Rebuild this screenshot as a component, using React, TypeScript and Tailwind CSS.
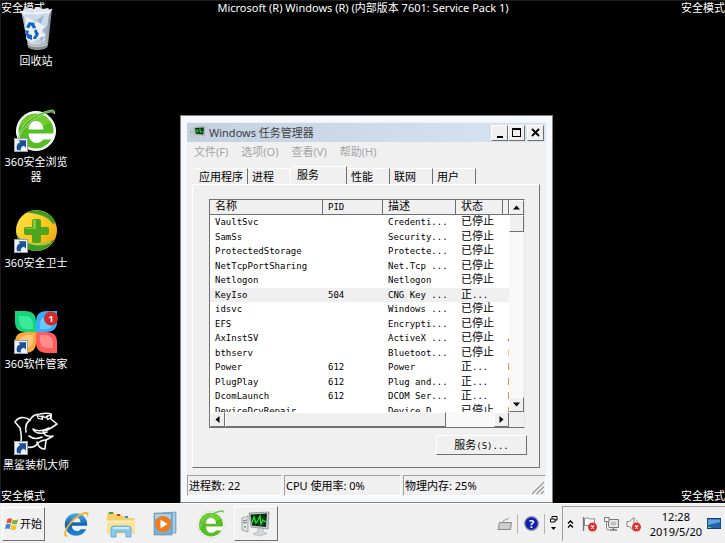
import { useState, type ReactNode } from 'react'
import clsx from 'clsx'

const services = [
  { name: 'VaultSvc', pid: '', desc: 'Credenti...', running: false, group: '' },
  { name: 'SamSs', pid: '', desc: 'Security...', running: false, group: '' },
  { name: 'ProtectedStorage', pid: '', desc: 'Protecte...', running: false, group: '' },
  { name: 'NetTcpPortSharing', pid: '', desc: 'Net.Tcp ...', running: false, group: '' },
  { name: 'Netlogon', pid: '', desc: 'Netlogon', running: false, group: '' },
  { name: 'KeyIso', pid: '504', desc: 'CNG Key ...', running: true, group: '' },
  { name: 'idsvc', pid: '', desc: 'Windows ...', running: false, group: '' },
  { name: 'EFS', pid: '', desc: 'Encrypti...', running: false, group: '' },
  { name: 'AxInstSV', pid: '', desc: 'ActiveX ...', running: false, group: 'A' },
  { name: 'bthserv', pid: '', desc: 'Bluetoot...', running: false, group: 'b' },
  { name: 'Power', pid: '612', desc: 'Power', running: true, group: 'D' },
  { name: 'PlugPlay', pid: '612', desc: 'Plug and...', running: true, group: 'D' },
  { name: 'DcomLaunch', pid: '612', desc: 'DCOM Ser...', running: true, group: 'D' },
  { name: 'DeviceDcyRepair', pid: '', desc: 'Device D', running: false, group: 'D' },
]

const tabs = [
  { label: '应用程序', width: 'w-[53px]' },
  { label: '进程', width: 'w-[43px]' },
  { label: '服务', width: 'w-[56px]' },
  { label: '性能', width: 'w-[43px]' },
  { label: '联网', width: 'w-[43px]' },
  { label: '用户', width: 'w-[43px]' },
]

const raised = 'border border-t-white border-l-white border-r-[#707070] border-b-[#707070] bg-[#f0f0f0]'

function Shortcut() {
  return (
    <g>
      <rect x="0.5" y="30.5" width="13" height="13" fill="#eef1f5" stroke="#9aa2ac" />
      <path d="M3 42c-1-4.500 .5-7 3.200-7.800L4.500 32.200h7.500v7.500l-2-2c-2.500.4-3.500 2-3.200 4.800z" fill="#1b4f96" />
    </g>
  )
}

function RecycleBin() {
  return (
    <svg className="h-11 w-11" viewBox="0 0 44 44">
      <defs>
        <linearGradient id="bin" x1="0" x2="1">
          <stop offset="0" stopColor="#8b959f" />
          <stop offset=".3" stopColor="#d5dfe8" />
          <stop offset=".75" stopColor="#b7c3cf" />
          <stop offset="1" stopColor="#707b86" />
        </linearGradient>
      </defs>
      <path d="M7 4 38 2l-4 36c-.5 4-19 5-20 0z" fill="url(#bin)" />
      <path d="M7 5l5-4 6 2 5-3 6 2 5-1 3 4-4 5-22 2z" fill="#dfe6ee" />
      <path d="M10 8l8-4 5 5 7-4 5 3-2 12-5 12-7-3-7 5-3-10z" fill="#cbdbea" />
      <path d="M12 10l7 3-3 7 8-5 7 5-4 7 5-2-2 9-6-2-6 3-6-3z" fill="#e9f0f6" />
      <path d="M17 9l6 4 7-5-3 9zM28 23l5-4-1 9zM25 31l6-2-3 5z" fill="#9fb3c7" />
      <path d="M12 20l3-5 5 1 2 5-3 .5-2-3.500-2 3.500zM11 23l4 1-1 3 4 1v5l-5-2zM22 22l3 5-3 5h-3l1-3 1.500-1-1.500-4z" fill="#1763c4" />
      <path d="M13 35c2 4 19 4 21 0l-.6 5c-3 4-17 4-19.500 0z" fill="#8a8f95" />
      <path d="M14 37c3 3 16 3 19 0" stroke="#eee" fill="none" />
      <path d="M6 4c5 4 29 3 32-2" stroke="#f5f8fa" strokeWidth="1.300" fill="none" />
    </svg>
  )
}

function GreenEShape({ ring }: { ring: string }) {
  return (
    <g>
      <circle cx="22" cy="23" r="19.500" fill="#fff" stroke={ring} />
      <circle cx="22" cy="23" r="17.500" fill="#56bd22" />
      <path d="M5 18a18 18 0 0 1 32-4L22 22z" fill="#83d63a" opacity=".6" />
      <path d="M14.500 21.500c.5-5.500 3.500-8.500 7.500-8.500s7 3 7.500 8.500z" fill="#fff" />
      <path d="M14.500 25.500H40c-.3 2-1 4-2 6h-8.500c-2 2.500-4.500 3.500-7 3.500-4.500 0-7.500-3.500-8-9.500z" fill="#fff" />
      <path d="M4 32C5 18 20 5 38 2c2 0 3 1 2.500 4-1-2-3-2.500-6-1.500C19 8 8 20 4 32z" fill="#35a018" stroke="#bdeb9a" strokeWidth=".8" />
    </g>
  )
}

function SafeBrowser() {
  return (
    <svg className="h-11 w-11" viewBox="0 0 44 44">
      <GreenEShape ring="#fff" />
      <Shortcut />
    </svg>
  )
}

function SafeGuard() {
  return (
    <svg className="h-11 w-11" viewBox="0 0 44 44">
      <defs>
        <linearGradient id="ball" x1="0" y1="0" x2="1" y2="1">
          <stop offset="0" stopColor="#ffe94a" />
          <stop offset=".6" stopColor="#f9c01c" />
          <stop offset="1" stopColor="#ee9a10" />
        </linearGradient>
      </defs>
      <circle cx="22.500" cy="21.500" r="20.500" fill="url(#ball)" />
      <path d="M12 3.500C22-1 33 2 39 9c2 4 2 7 0 6C33 7 26 5 12 3.500z" fill="#3c9a25" />
      <path d="M2.500 24C6 35 24 40 41 30 34 43 19 45 10 38 5 34 3 29 2.500 24z" fill="#3c9a25" />
      <path d="M7 29c8 7 20 9 30 4" stroke="#9bd34a" strokeWidth="1.500" fill="none" />
      <path d="M20 10h5q2 0 2 2v6h6q2 0 2 2v4q0 2-2 2h-6v6q0 2-2 2h-5q-2 0-2-2v-6h-6q-2 0-2-2v-4q0-2 2-2h6v-6q0-2 2-2z" fill="#4da51e" />
      <path d="M19 11h3v9h-10v-1h7z" fill="#83c83e" />
      <Shortcut />
    </svg>
  )
}

function SoftManager() {
  return (
    <svg className="h-11 w-11" viewBox="0 0 44 44">
      <path d="M1 1h10q11 0 11 11v10H12Q1 22 1 12z" fill="#15d57c" />
      <path d="M5 6h6q7 0 8 8v5h-6q-7 0-8-7z" fill="#3be99a" />
      <path d="M43 1H33Q22 1 22 12v10h10q11 0 11-10z" fill="#36aefa" />
      <path d="M39 6h-5q-8 1-8 8v5h6q7 0 7-7z" fill="#69c9ff" />
      <path d="M1 43h10q11 0 11-11V22H12Q1 22 1 32z" fill="#f7a93c" />
      <path d="M5 38h6q7 0 8-7v-6h-6q-8 1-8 8z" fill="#fdc878" />
      <path d="M43 43H33Q22 43 22 32V22h10q11 0 11 10z" fill="#ff5c5e" />
      <path d="M39 38h-5q-8-1-8-7v-6h6q7 1 7 8z" fill="#ff8c8b" />
      <circle cx="37" cy="8.500" r="7" fill="#d22a2c" />
      <text x="37" y="12" textAnchor="middle" fontSize="9" fontWeight="bold" fill="#fff">1</text>
      <Shortcut />
    </svg>
  )
}

function Shark() {
  return (
    <svg className="h-11 w-11" viewBox="0 0 44 44">
      <g fill="none" stroke="#f4f4f4" strokeWidth="1.600" strokeLinejoin="round" strokeLinecap="round">
        <path d="M7 30c1-5 0-8-1-13L1 11c3-5 9-6 15-2 2-4 6-6 10-6 5-1 8-1 11 0v5l6 5-6 4c-3 2-5 3-8 3 1 4 3 6 10 5-3 2-5 3-7 4l-1 9c-4 0-7-3-8-7" />
        <path d="M12 36c5 1 9 0 11-3 3-3 6-4 9-4M16 9c-4 3-5 7-4 12M19 18c5 3 10 2 16-1M19 18c2 5 9 5 14 3M15 25c4 3 9 3 13 1" />
        <path d="M29 5c1 2 3 2 4 0" />
      </g>
      <path d="M22 4l7 1v4l-5-1zM32 5l6-2-1 5-4 1z" fill="#fff" />
      <path d="M24 5.500l3.500.5v1.500l-3-.5zM33.500 6l2.500-1v1.500l-2 1z" fill="#000" />
      <Shortcut />
    </svg>
  )
}

function TaskManagerIcon({ className }: { className: string }) {
  return (
    <svg className={className} viewBox="0 0 30 26">
      <path d="M1 7l6-2v16l-6-2z" fill="#dfe3e6" stroke="#858b90" strokeWidth=".7" />
      <path d="M2 10l4-1M2 12l4-.5" stroke="#777" />
      <circle cx="4" cy="16" r="1" fill="#3ac43a" />
      <path d="M8 2l20-1-1 17-17-2z" fill="#c9ced2" stroke="#7b8287" strokeWidth=".7" />
      <path d="M9.500 3.500l16.500-1-1 13.500-14-1.500z" fill="#0b2a10" />
      <path d="M10 7h15M10.500 11h14M14 3v12M18 3v12M22 3v12" stroke="#176b20" strokeWidth=".5" />
      <path d="M11 12l2-6 2 6 2-3 2-4 1 8 2-4 3 2" stroke="#27e03a" strokeWidth="1.300" fill="none" />
      <path d="M17 17l5 .5v3l4 2-7 2.500-7-2 5-2.500z" fill="#d4d8db" stroke="#9a9fa4" strokeWidth=".5" />
    </svg>
  )
}

function WindowsFlag() {
  return (
    <svg className="h-3.5 w-3.5 shrink-0" viewBox="0 0 14 14">
      <path d="M2.500 2c2-1.200 3-.8 4.500 0L6 6.500C4.500 5.600 3.300 5.600 1.300 6.500z" fill="#e8502a" />
      <path d="M7.800 2.500c1.800.9 3.300.8 5.400-.3L12 6.800c-2 1-3.500.9-5.200 0z" fill="#7cb82f" />
      <path d="M1 7.500c2-1 3.200-.8 4.700 0l-1.100 4.400C3 11.200 1.800 11.200 0 12z" fill="#3c86d8" />
      <path d="M6.500 7.900c1.700.9 3.200.9 5.300 0l-1.200 4.500c-2 1-3.500.8-5.200 0z" fill="#f6c224" />
    </svg>
  )
}

function IeIcon() {
  return (
    <svg className="h-7 w-7" viewBox="0 0 30 30">
      <defs>
        <linearGradient id="ie" x1="0" y1="0" x2="0" y2="1">
          <stop offset="0" stopColor="#4db1f0" />
          <stop offset=".5" stopColor="#1463b4" />
          <stop offset="1" stopColor="#1f86d6" />
        </linearGradient>
      </defs>
      <circle cx="15" cy="15.500" r="12" fill="url(#ie)" />
      <path d="M10.500 13c.5-3.300 2.300-4.700 4.800-4.700s4.300 1.400 4.700 4.700z" fill="#f0f0f0" />
      <path d="M10.500 17H28l-1 3.500h-7c-1 1.500-2.500 2-4.500 2-3 0-4.700-2-5-5.500z" fill="#f0f0f0" />
      <path d="M7 28c-5 2-6-2-3-8C8 12 17 4 25 2c4-.3 4 3 2.300 6.500.3-3-.8-4.500-3-4C17 6 8 15 5 22c-1.200 3-.8 5 2 6z" fill="#f3b42b" />
    </svg>
  )
}

function FolderIcon() {
  return (
    <svg className="h-7 w-[30px]" viewBox="0 0 30 28">
      <path d="M1 4q0-2 2-2h5l1 2h6l1 2h5l1 2h5q2 0 2 2v14H1z" fill="#f1cf6b" />
      <path d="M3 2h4v2H3z" fill="#30a83c" />
      <path d="M11 4h3v2h-3z" fill="#d33b2b" />
      <path d="M19 6h3v2h-3z" fill="#3a87d8" />
      <path d="M1 10h28v14H1z" fill="#f8e29a" />
      <path d="M1 12h28" stroke="#fff3c8" />
      <path d="M5 27v-8q0-3 3-3h14q3 0 3 3v8h-5v-5H10v5z" fill="#8ccbed" stroke="#4a9cc9" strokeWidth=".7" />
      <path d="M7 18h16" stroke="#dff3fc" strokeWidth="1.500" />
    </svg>
  )
}

function MediaIcon() {
  return (
    <svg className="h-7 w-7" viewBox="0 0 28 28">
      <path d="M9 3l15-1v21l-15 2z" fill="#87b9d8" stroke="#5b93b8" strokeWidth=".6" />
      <path d="M22 3v21" stroke="#c9e2f0" />
      <path d="M2 3h18v22H2z" fill="#79afd0" stroke="#5890b5" strokeWidth=".6" />
      <path d="M3 4h16v5H3z" fill="#a8cfe5" />
      <circle cx="11" cy="14" r="8" fill="#f17a1d" />
      <path d="M8.500 9.500v9l7-4.500z" fill="#fff" />
    </svg>
  )
}

function TrayX() {
  return (
    <g>
      <circle cx="10.500" cy="11" r="4.500" fill="#de3131" />
      <path d="M9 9.500l3 3M12 9.500l-3 3" stroke="#fff" strokeWidth="1.300" />
    </g>
  )
}

function DesktopIcon({ label, children }: { label: string; children: ReactNode }) {
  return (
    <a href="#" className="flex h-[101px] flex-col items-center text-center leading-[15px] text-white">
      {children}
      <span className="mt-0.5 w-full">{label}</span>
    </a>
  )
}

function ArrowButton({ label, path }: { label: string; path: string }) {
  return (
    <button aria-label={label} className={clsx(raised, 'flex h-[15px] w-[15px] shrink-0 items-center justify-center')}>
      <svg className="h-[9px] w-[9px]" viewBox="0 0 9 9">
        <path d={path} fill="#000" />
      </svg>
    </button>
  )
}

function ServiceList() {
  return (
    <div className="flex h-[229px] flex-col border border-t-[#707070] border-r-[#e4e4e4] border-b-[#707070] border-l-[#707070] bg-white">
      <div className="flex min-h-0 flex-1">
        <div className="min-w-0 flex-1 overflow-hidden">
          <table className="h-[218px] w-full table-fixed border-separate border-spacing-0 font-['DejaVu_Sans_Mono','Noto_Sans_CJK_SC',monospace] text-[9px] leading-[14px] whitespace-nowrap">
            <colgroup>
              <col className="w-[113px]" />
              <col className="w-[60px]" />
              <col className="w-[73px]" />
              <col className="w-[47px]" />
              <col />
            </colgroup>
            <thead>
              <tr className="h-[15px] bg-[#f0f0f0] text-left *:overflow-hidden *:border-r *:border-b *:border-[#707070] *:p-0 *:pl-[5px] *:font-normal">
                <th className="text-[11px]">名称</th>
                <th>PID</th>
                <th className="text-[11px]">描述</th>
                <th className="text-[11px]">状态</th>
                <th className="text-[11px]">工</th>
              </tr>
            </thead>
            <tbody>
              {services.map((s) => (
                <tr
                  key={s.name}
                  className={clsx('*:overflow-hidden *:p-0 *:pl-[5px]', s.name === 'KeyIso' && 'bg-[#f0f0f0]')}
                >
                  <td>{s.name}</td>
                  <td>{s.pid}</td>
                  <td>{s.desc}</td>
                  <td>
                    <span className="text-[11px]">{s.running ? '正' : '已停止'}</span>
                    {s.running && '...'}
                  </td>
                  <td>{s.group}</td>
                </tr>
              ))}
            </tbody>
          </table>
        </div>
        <div className="flex w-[15px] flex-col bg-[#f8f8f8]">
          <ArrowButton label="向上" path="M4.500 2.500 8 6.500H1z" />
          <div className={clsx(raised, 'h-[17px]')} />
          <div className="flex-1" />
          <ArrowButton label="向下" path="M4.500 6.500 8 2.500H1z" />
        </div>
      </div>
      <div className="flex h-[15px] bg-[#f8f8f8]">
        <ArrowButton label="向左" path="M2.500 4.500 6.500 1v7z" />
        <div className={clsx(raised, 'w-[221px]')} />
        <div className="flex-1" />
        <ArrowButton label="向右" path="M6.500 4.500 2.500 1v7z" />
        <div className="w-[15px] bg-[#f0f0f0]" />
      </div>
    </div>
  )
}

function TaskManager() {
  const [tab, setTab] = useState('服务')

  return (
    <section className="absolute top-[114px] left-[179px] flex w-[373px] flex-col border border-[#808080] bg-[#f5f8fd] p-1.5">
      <div className="bg-[#f0f0f0]">
        {/* Title bar */}
        <header className="mt-px flex h-[19px] items-center bg-linear-to-r from-[#c3d1e0] to-[#d7e4f2] pr-0.5 pl-[3px]">
          <TaskManagerIcon className="h-3.5 w-4" />
          <h1 className="flex-1 pl-[3px] text-[#404040]">Windows 任务管理器</h1>
          <button aria-label="最小化" className={clsx(raised, 'flex h-4 w-[17px] items-end justify-center pb-0.5')}>
            <span className="h-0.5 w-1.5 bg-black" />
          </button>
          <button aria-label="最大化" className={clsx(raised, 'flex h-4 w-[17px] items-center justify-center')}>
            <span className="h-[9px] w-[9px] border border-t-2 border-black" />
          </button>
          <button aria-label="关闭" className={clsx(raised, 'ml-0.5 flex h-4 w-[17px] items-center justify-center')}>
            <svg className="h-[9px] w-[9px]" viewBox="0 0 9 9">
              <path d="M1 1l7 7M8 1L1 8" stroke="#000" strokeWidth="1.800" />
            </svg>
          </button>
        </header>

        <nav className="flex h-[18px] items-center gap-[13px] pl-[7px] text-[#a5a5a5]">
          <button>文件(F)</button>
          <button>选项(O)</button>
          <button>查看(V)</button>
          <button>帮助(H)</button>
        </nav>

        {/* Tabs */}
        <div role="tablist" className="mt-1.5 flex h-[18px] items-end pl-2">
          {tabs.map((t) => (
            <button
              key={t.label}
              role="tab"
              aria-selected={tab === t.label}
              onClick={() => setTab(t.label)}
              className={clsx(
                t.width,
                'border-t border-r border-t-white pl-1 text-left',
                tab === t.label ? 'h-[18px] pb-0.5 pl-1.5' : 'h-4',
                t.label === '进程' ? 'border-r-white' : 'border-r-[#707070]',
              )}
            >
              {t.label}
            </button>
          ))}
        </div>
        <div className="mr-1.5 ml-[5px] border border-t-white border-r-[#707070] border-b-[#707070] border-l-white pt-3.5 pr-3.5 pb-3 pl-4">
          <ServiceList />
          <div className="-mr-0.5 flex justify-end pt-[7px]">
            <button className={clsx(raised, 'h-5 w-[91px]')}>
              服务<span className="font-['DejaVu_Sans_Mono',monospace] text-[9px]">(S)...</span>
            </button>
          </div>
        </div>

        {/* Status bar */}
        <footer className="mt-[7px] flex h-[21px] items-center gap-0.5 *:h-full *:border *:border-t-[#a0a0a0] *:border-r-white *:border-b-white *:border-l-[#a0a0a0] *:pl-px *:leading-[19px]">
          <div className="w-[95px]">进程数: 22</div>
          <div className="w-[117px]">CPU 使用率: 0%</div>
          <div className="flex flex-1 items-end justify-between">
            <span>物理内存: 25%</span>
            <svg className="h-3.5 w-3.5" viewBox="0 0 14 14" stroke="#9a9a9a" strokeWidth="1.300">
              <path d="M1 13L13 1M5.500 13L13 5.500M10 13l3-3" />
            </svg>
          </div>
        </footer>
      </div>
    </section>
  )
}

function Taskbar() {
  return (
    <footer className="flex h-10 items-center border-t border-white bg-[#f0f0f0] pl-0.5">
      <button className={clsx(raised, 'flex h-[34px] w-[43px] items-center gap-px pl-0.5')}>
        <WindowsFlag />
        开始
      </button>
      <div className="ml-[17px] flex items-center gap-4">
        <button aria-label="Internet Explorer"><IeIcon /></button>
        <button aria-label="资源管理器"><FolderIcon /></button>
        <button aria-label="媒体播放器"><MediaIcon /></button>
        <button aria-label="360安全浏览器">
          <svg className="h-[30px] w-[30px]" viewBox="0 0 44 44">
            <GreenEShape ring="#d0d0d0" />
          </svg>
        </button>
      </div>
      <button aria-label="任务管理器" className={clsx(raised, 'ml-2 flex h-[35px] w-11 items-center justify-center')}>
        <TaskManagerIcon className="h-[26px] w-[30px]" />
      </button>

      <div className="ml-auto flex items-center">
        <button aria-label="输入法">
          <svg className="h-4 w-4" viewBox="0 0 16 16">
            <path d="M6 6c0-3 4-1 6-4.500" stroke="#8c8c8c" fill="none" />
            <path d="M2.500 6.500h12l-1 7H1z" fill="#c4c4c4" stroke="#8c8c8c" strokeLinejoin="round" />
            <path d="M3.500 8.500h9.500M3 10.500h10M4 12h8" stroke="#f2f2f2" strokeWidth=".7" strokeDasharray="1.500 1" />
          </svg>
        </button>
        <span className="ml-1 h-5 w-px bg-[#b5b5b5]" />
        <button aria-label="帮助" className="ml-1.5">
          <svg className="h-[15px] w-[15px]" viewBox="0 0 15 15">
            <circle cx="7.500" cy="7.500" r="6.800" fill="#1220b0" stroke="#8d93a8" strokeWidth="1.200" />
            <text x="7.500" y="11.500" textAnchor="middle" fontSize="11" fontWeight="bold" fill="#fff">?</text>
          </svg>
        </button>
        <span className="ml-[5px] h-5 w-px bg-[#b5b5b5]" />
        <button aria-label="选项" className="ml-1">
          <svg className="h-[18px] w-[9px]" viewBox="0 0 9 18">
            <path d="M3 3.500V1.500h5v3.500H6M1.500 4h4.500v3h-4.500z" fill="none" stroke="#000" />
            <path d="M2 12h5l-2.500 3z" />
          </svg>
        </button>
        <div className="ml-1 flex h-[35px] items-center border-t border-l border-[#a0a0a0] pr-1 pl-1">
          <button aria-label="显示隐藏的图标">
            <svg className="h-2.5 w-[7px]" viewBox="0 0 7 10" fill="none" stroke="#000" strokeWidth="1.300">
              <path d="M1 4.500L3.500 2 6 4.500M1 8.500L3.500 6 6 8.500" />
            </svg>
          </button>
          <div className="ml-2 flex gap-[7px]">
            <svg className="h-4 w-[15px]" viewBox="0 0 15 16" fill="none">
              <path d="M1.500 1v14" stroke="#7a7a7a" strokeWidth="1.400" />
              <path d="M2.500 2.500c4-2 5 2 10 0v7.500c-5 2-6-2-10 0z" fill="#fafafa" stroke="#8a8a8a" />
              <TrayX />
            </svg>
            <svg className="h-4 w-[15px]" viewBox="0 0 15 16" fill="none" stroke="#7a7a7a">
              <path d="M4.500 3.500h10v8h-10z" fill="#dcdcdc" />
              <path d="M6 5h7v5H6z" fill="#c2c2c2" stroke="#f8f8f8" />
              <path d="M6 14h7M9.500 11.500V14" strokeWidth="1.500" />
              <path d="M.5 1.500h4.500v4H.5zM2.500 5.500v6c0 2 1 2.500 3 2.500" fill="#f8f8f8" />
            </svg>
            <svg className="h-4 w-[15px]" viewBox="0 0 15 16" fill="none">
              <path d="M1 5.500h2.500L8 1.500v13l-4.500-4H1z" fill="#f4f4f4" stroke="#858585" />
              <path d="M10 3.500c1.500 1.500 1.500 3 1.500 4" stroke="#999" />
              <TrayX />
            </svg>
          </div>
          <time className="ml-[9px] text-center leading-[15px]">
            12:28
            <br />
            2019/5/20
          </time>
          <svg className="ml-[5px] h-3 w-3.5" viewBox="0 0 14 12">
            <path d="M0 .5h14v10H0z" fill="#2463ad" stroke="#163b6b" />
            <path d="M1 1.500h12v2.500L1 7z" fill="#5fa6df" />
            <path d="M1 9.500h3" stroke="#7dd35a" />
          </svg>
        </div>
      </div>
    </footer>
  )
}

export default function App() {
  return (
    <div className="flex h-screen flex-col bg-black font-['Noto_Sans','Noto_Sans_CJK_SC',sans-serif] text-[11px] leading-[15px] text-black">
      <main className="relative flex-1 overflow-hidden border-t border-l border-[#1c1c1c]">
        <div className="-mt-px flex justify-between text-white">
          <span>安全模式</span>
          <p>Microsoft (R) Windows (R) (内部版本 7601: Service Pack 1)</p>
          <span>安全模式</span>
        </div>
        <div className="absolute inset-x-0 bottom-0 flex justify-between text-white">
          <span>安全模式</span>
          <span>安全模式</span>
        </div>

        <div className="relative -mt-2 -ml-px flex w-[72px] flex-col">
          <DesktopIcon label="回收站"><RecycleBin /></DesktopIcon>
          <DesktopIcon label="360安全浏览器"><SafeBrowser /></DesktopIcon>
          <DesktopIcon label="360安全卫士"><SafeGuard /></DesktopIcon>
          <DesktopIcon label="360软件管家"><SoftManager /></DesktopIcon>
          <DesktopIcon label="黑鲨装机大师"><Shark /></DesktopIcon>
        </div>

        <TaskManager />
      </main>
      <Taskbar />
    </div>
  )
}
